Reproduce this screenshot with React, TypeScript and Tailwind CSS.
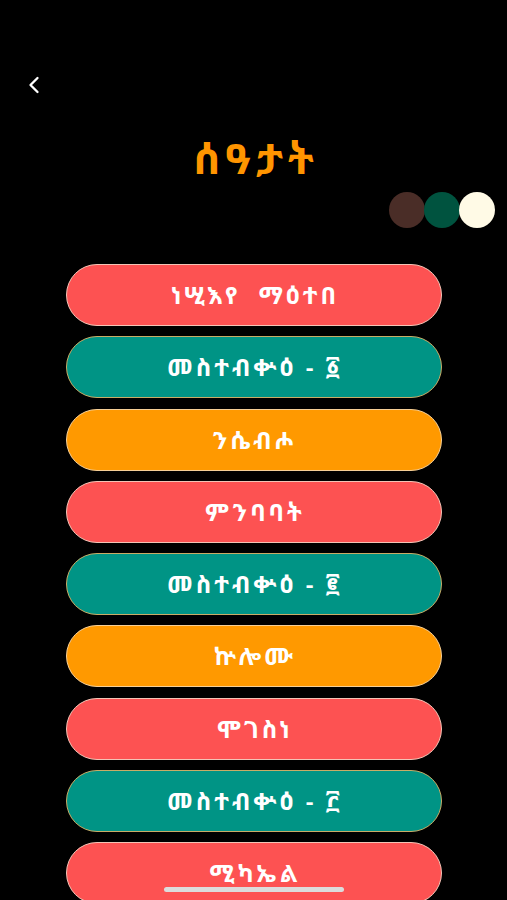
import { ChevronLeft } from 'lucide-react';

const ETHIOPIC = '"Noto Sans Ethiopic", "Abyssinica SIL", "Noto Serif Ethiopic", "DejaVu Sans", sans-serif';

type Item = { label: string; tone: 'red' | 'teal' | 'orange' };

const items: Item[] = [
  { label: 'ነሢእየ  ማዕተበ', tone: 'red' },
  { label: 'መስተብቍዕ - ፩', tone: 'teal' },
  { label: 'ንሴብሖ', tone: 'orange' },
  { label: 'ምንባባት', tone: 'red' },
  { label: 'መስተብቍዕ - ፪', tone: 'teal' },
  { label: 'ኵሎሙ', tone: 'orange' },
  { label: 'ሞገስነ', tone: 'red' },
  { label: 'መስተብቍዕ - ፫', tone: 'teal' },
  { label: 'ሚካኤል', tone: 'red' },
];

const toneClass = {
  red: 'bg-[#fd5252] border-[#f3c4b6]',
  teal: 'bg-[#009485] border-[#c9ac66]',
  orange: 'bg-[#ff9900] border-[#f6cf97]',
};

export default function App() {
  return (
    <div className="relative h-[900px] w-[507px] overflow-hidden bg-black" style={{ fontFamily: ETHIOPIC }}>
      {/* Top bar */}
      <div className="h-[68px]" />
      <div className="flex h-[34px] items-center pl-[20px]">
        <ChevronLeft className="h-7 w-7 text-white" strokeWidth={2} />
      </div>

      {/* Title */}
      <div className="mt-[36px] flex justify-center">
        <h1 className="whitespace-pre pl-[5px] text-[42px] font-bold leading-[40px] tracking-[5px] text-[#ff9500]">ሰዓታት</h1>
      </div>

      {/* Theme swatches */}
      <div className="mt-[14px] flex justify-end pr-[12px]">
        <div className="flex -space-x-[1px]">
          <span className="h-[36px] w-[36px] rounded-full bg-[#4a2d27]" />
          <span className="h-[36px] w-[36px] rounded-full bg-[#00533f]" />
          <span className="h-[36px] w-[36px] rounded-full bg-[#fffae6]" />
        </div>
      </div>

      {/* Menu */}
      <div className="mt-[36px] flex flex-col items-center gap-[10.3px]">
        {items.map((it, i) => (
          <button
            key={i}
            className={`flex h-[62px] w-[376px] items-center justify-center whitespace-pre rounded-full border ${toneClass[it.tone]} pl-[3px] text-[24px] font-bold tracking-[3px] text-white`}
          >
            {it.label}
          </button>
        ))}
      </div>

      {/* Home indicator */}
      <div className="absolute bottom-[8px] left-1/2 h-[5px] w-[180px] -translate-x-1/2 rounded-full bg-[#dcdcdc]" />
    </div>
  );
}
